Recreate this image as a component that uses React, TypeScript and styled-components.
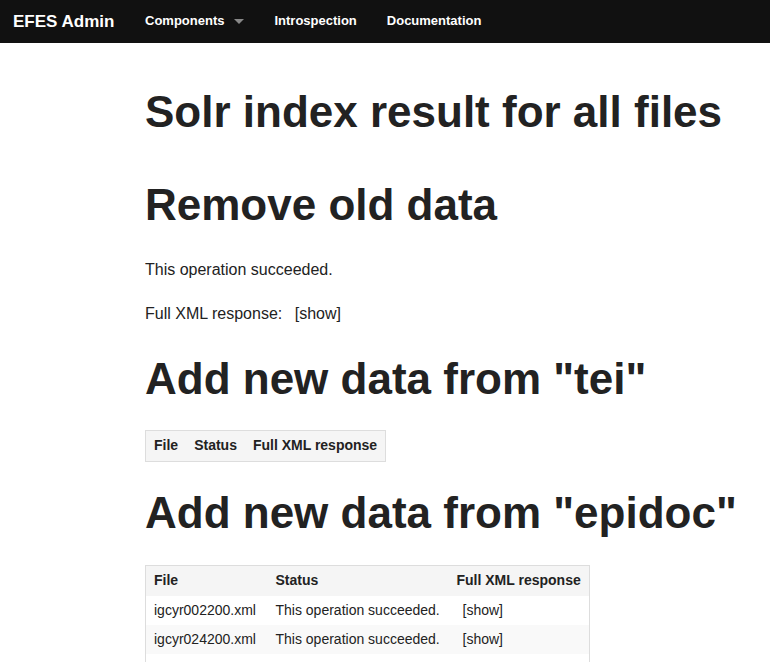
import styled, { createGlobalStyle } from "styled-components";

const Global = createGlobalStyle`
  html, body { margin: 0; padding: 0; background: #fff; }
  body {
    font-family: "Liberation Sans", Arial, sans-serif;
    color: #222;
    font-size: 16px;
    line-height: 1.4;
  }
`;

const NavBar = styled.nav`
  height: 43px;
  background: #111;
  display: flex;
  align-items: center;
  padding-left: 13px;
`;

const Brand = styled.a`
  color: #fff;
  font-weight: bold;
  font-size: 17px;
  width: 132px;
`;

const NavLinks = styled.div`
  display: flex;
  align-items: center;
  gap: 30px;
`;

const NavLink = styled.a`
  color: #fff;
  font-weight: bold;
  font-size: 13px;
  display: flex;
  align-items: center;
`;

const Caret = styled.span`
  display: inline-block;
  margin-left: 10px;
  width: 0;
  height: 0;
  border-left: 5px solid transparent;
  border-right: 5px solid transparent;
  border-top: 5px solid #888;
`;

const Main = styled.main`
  padding-left: 145px;
  padding-top: 45px;
`;

const Title = styled.h1`
  font-size: 44px;
  font-weight: bold;
  line-height: 1.1;
  margin: 0 0 45px;
`;

const Heading = styled.h2`
  font-size: 44px;
  font-weight: bold;
  line-height: 1.1;
  margin: 29px 0 29px;
`;

const Text = styled.p`
  margin: 0 0 22px;
`;

const ShowLink = styled.a<{ $gap: number }>`
  margin-left: ${(p) => p.$gap}px;
`;

const Table = styled.table`
  border-collapse: collapse;
  border: 1px solid #ddd;
  font-size: 14px;
  line-height: 19px;
  margin: -1.5px 0 -2.5px;
`;

const Col = styled.col<{ $w?: number }>`
  width: ${(p) => (p.$w ? `${p.$w}px` : "auto")};
`;

const HeadCell = styled.th`
  background: #f5f5f5;
  text-align: left;
  font-weight: bold;
  padding: 5px 8px 6px;
`;

const Row = styled.tr<{ $striped?: boolean }>`
  background: ${(p) => (p.$striped ? "#f9f9f9" : "#fff")};
`;

const Cell = styled.td`
  padding: 5px 8px;
`;

const rows = ["igcyr002200.xml", "igcyr024200.xml", "igcyr024300.xml"];

export default function App() {
  return (
    <>
      <Global />
      <NavBar>
        <Brand>EFES Admin</Brand>
        <NavLinks>
          <NavLink>
            Components <Caret />
          </NavLink>
          <NavLink>Introspection</NavLink>
          <NavLink>Documentation</NavLink>
        </NavLinks>
      </NavBar>
      <Main>
        <Title>Solr index result for all files</Title>
        <Heading>Remove old data</Heading>
        <Text>This operation succeeded.</Text>
        <Text>
          Full XML response: <ShowLink $gap={8}>[show]</ShowLink>
        </Text>
        <Heading>Add new data from "tei"</Heading>
        <Table>
          <thead>
            <tr>
              <HeadCell>File</HeadCell>
              <HeadCell>Status</HeadCell>
              <HeadCell>Full XML response</HeadCell>
            </tr>
          </thead>
        </Table>
        <Heading>Add new data from "epidoc"</Heading>
        <Table>
          <colgroup>
            <Col $w={122} />
            <Col $w={181} />
            <Col />
          </colgroup>
          <thead>
            <tr>
              <HeadCell>File</HeadCell>
              <HeadCell>Status</HeadCell>
              <HeadCell>Full XML response</HeadCell>
            </tr>
          </thead>
          <tbody>
            {rows.map((f, i) => (
              <Row key={f} $striped={i % 2 === 1}>
                <Cell>{f}</Cell>
                <Cell>This operation succeeded.</Cell>
                <Cell>
                  <ShowLink $gap={6}>[show]</ShowLink>
                </Cell>
              </Row>
            ))}
          </tbody>
        </Table>
      </Main>
    </>
  );
}
